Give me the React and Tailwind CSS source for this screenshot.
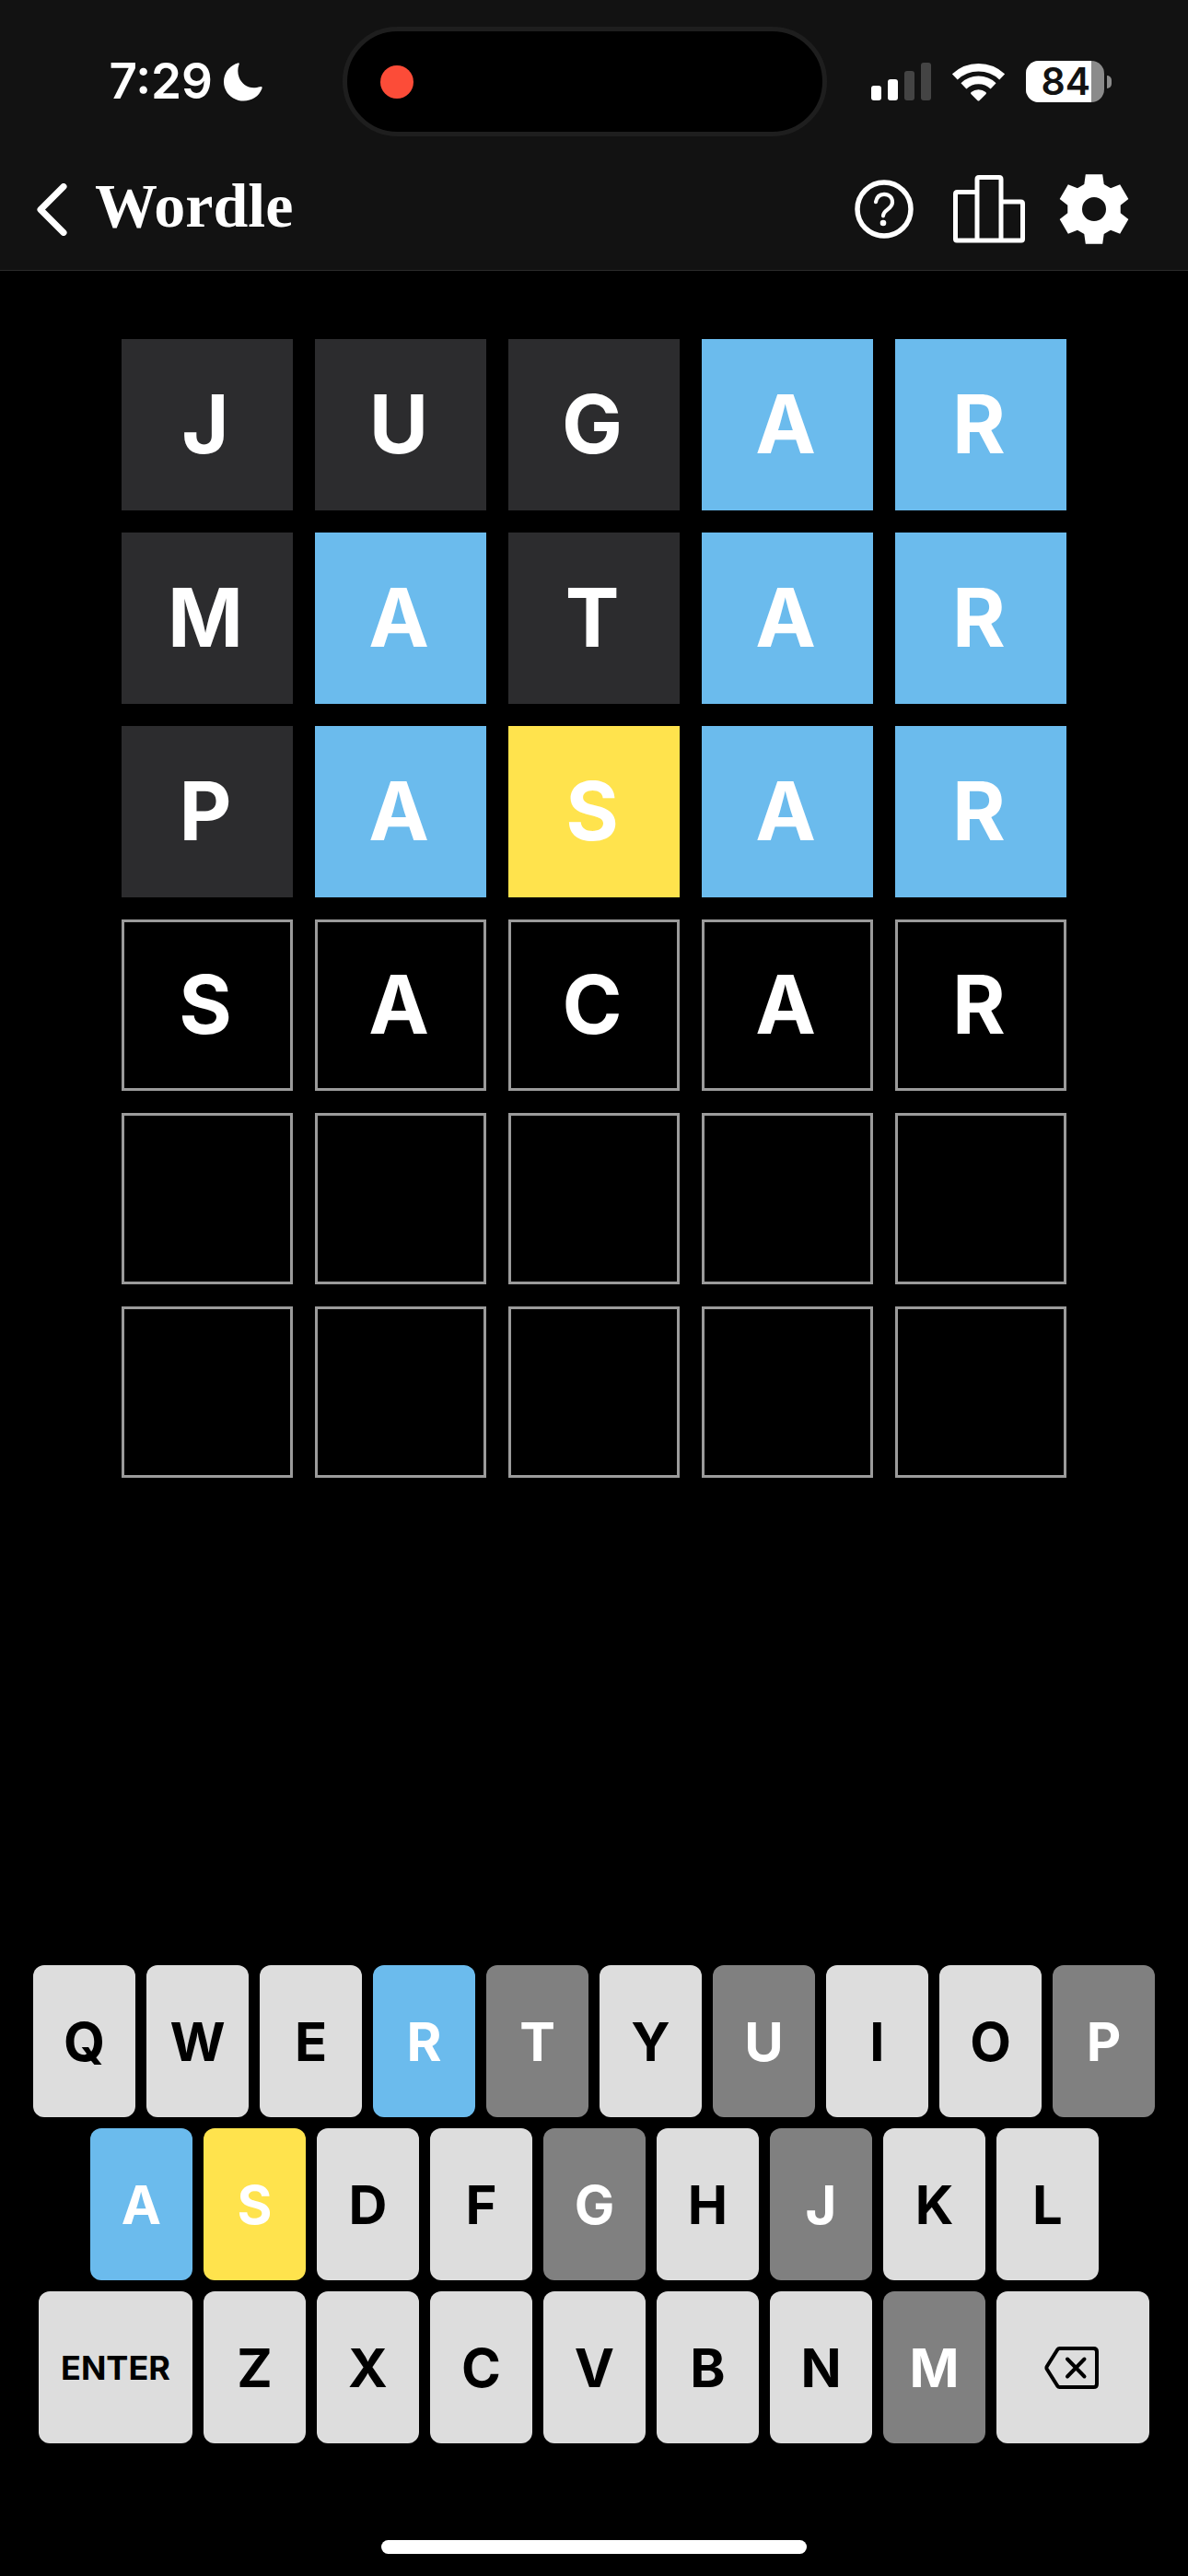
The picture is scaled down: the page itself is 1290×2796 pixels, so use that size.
import React from "react";

const rows = [
  { word: "JUGAR", marks: "xxxcc" },
  { word: "MATAR", marks: "xcxcc" },
  { word: "PASAR", marks: "xcpcc" },
  { word: "SACAR", marks: "     " },
  { word: "     ", marks: "     " },
  { word: "     ", marks: "     " },
];

const tileStyles = {
  x: "bg-[#2c2c2e]",
  c: "bg-[#6bbbed]",
  p: "bg-[#ffe34d]",
  " ": "border-[3px] border-[#9b9b9b]",
};

const keyStyles = {
  x: "bg-[#808080] text-white",
  c: "bg-[#6bbbed] text-white",
  p: "bg-[#ffe34d] text-white",
  default: "bg-[#dddddd] text-black",
};

const keyMarks = { R: "c", A: "c", S: "p", T: "x", U: "x", P: "x", G: "x", J: "x", M: "x" };

function Moon() {
  return (
    <svg width="42" height="42" viewBox="0 0 42 42" fill="#fff" aria-hidden="true">
      <path d="M15.3.4C16.9 0 17 1 16.4 2.6C15 6.5 14.8 11.5 16.6 16C19.4 23.3 26.5 28 34 27.2C37 26.9 38.8 26 40.2 25.9C41.8 25.8 41.8 27 41.3 28.5C38.2 36.5 30.5 41.5 21.5 41.5C9.5 41.5 0 32.3 0 20.7C0 11 6.3 2.9 15.3.4Z" />
    </svg>
  );
}

function Signal() {
  return (
    <svg width="65" height="41" viewBox="0 0 65 41" role="img" aria-label="Signal">
      <rect x="0" y="25" width="11" height="16" rx="3" fill="#fff" />
      <rect x="18" y="18" width="11" height="23" rx="3" fill="#fff" />
      <rect x="36" y="9" width="11" height="32" rx="3" fill="#444" />
      <rect x="54" y="0" width="11" height="41" rx="3" fill="#444" />
    </svg>
  );
}

function Wifi() {
  return (
    <svg width="57" height="42" viewBox="0 0 57 42" role="img" aria-label="Wi-Fi">
      <g fill="none" stroke="#fff" strokeWidth="8.6">
        <path d="M2.8 15.4A37.5 37.5 0 0 1 54.2 15.4" />
        <path d="M12.4 25.3A23.3 23.3 0 0 1 44.6 25.3" />
      </g>
      <path d="M27.6 41.2L20.3 33.9Q19.5 32.8 20.6 31.9A13 13 0 0 1 36.4 31.9Q37.5 32.8 36.7 33.9L29.4 41.2Q28.5 42 27.6 41.2Z" fill="#fff" />
    </svg>
  );
}

function Battery() {
  return (
    <div className="flex items-center gap-[3px]">
      <div className="flex h-[45px] w-[85px] items-center rounded-[14px] bg-[#8b8b8b]">
        <div className="flex h-full w-[71px] items-center justify-end rounded-l-[14px] bg-white pr-px text-[41px] leading-none font-semibold text-[#121212]">
          84
        </div>
      </div>
      <div className="h-[14px] w-[5px] rounded-r-full bg-[#8b8b8b]" />
    </div>
  );
}

function BackIcon() {
  return (
    <svg width="33" height="57" viewBox="0 0 33 57" fill="none" stroke="#fff" strokeWidth="7" strokeLinecap="round" strokeLinejoin="round" aria-hidden="true">
      <path d="M29 3.5L4 28.5L29 53.5" />
    </svg>
  );
}

function HelpIcon() {
  return (
    <svg width="64" height="64" viewBox="0 0 64 64" fill="none" stroke="#fff" aria-hidden="true">
      <circle cx="32" cy="32" r="29" strokeWidth="5.5" />
      <path d="M23 24.2C24 18.6 27.3 15.8 32 15.8C37.4 15.8 41 19.4 41 24.4C41 32 31 32.5 31 39.3" strokeWidth="4.2" strokeLinecap="round" />
      <circle cx="31" cy="47" r="3.3" fill="#fff" stroke="none" />
    </svg>
  );
}

function StatsIcon() {
  return (
    <svg width="78" height="74" viewBox="0 0 78 74" fill="none" stroke="#fff" strokeWidth="5" aria-hidden="true">
      <path d="M26 18.5H4.5Q2.5 18.5 2.5 20.5V69.5Q2.5 71 4 71H74Q75.5 71 75.5 69.5V31Q75.5 29 73.5 29H52" />
      <path d="M26 71V4.5Q26 2.5 28 2.5H50Q52 2.5 52 4.5V71" />
    </svg>
  );
}

const gearPoints = [0, 1, 2, 3, 4, 5]
  .flatMap((tooth) => {
    const angle = (tooth * Math.PI) / 3;
    return [
      [-10.7, -27],
      [-9.2, -37.8],
      [9.2, -37.8],
      [10.7, -27],
    ].map(([x, y]) => [
      38 + x * Math.cos(angle) - y * Math.sin(angle),
      38 + x * Math.sin(angle) + y * Math.cos(angle),
    ]);
  })
  .map(([x, y]) => `${x.toFixed(2)} ${y.toFixed(2)}`)
  .join("L");

function GearIcon() {
  return (
    <svg width="76" height="76" viewBox="0 0 76 76" aria-hidden="true">
      <path
        d={`M${gearPoints}ZM38 25A13 13 0 1 0 38 51A13 13 0 1 0 38 25Z`}
        fill="#fff"
        fillRule="evenodd"
      />
    </svg>
  );
}

function BackspaceIcon() {
  return (
    <svg width="59" height="46" viewBox="0 0 59 46" fill="none" stroke="#000" strokeWidth="4" strokeLinecap="round" strokeLinejoin="round" aria-hidden="true">
      <path d="M16.5 2H53.5Q57 2 57 5.5V40.5Q57 44 53.5 44H16.5Q15.2 44 14.3 42.8L2.8 24.5Q2 23 2.8 21.5L14.3 3.2Q15.2 2 16.5 2Z" />
      <path d="M25 13.5L43.5 32.5M43.5 13.5L25 32.5" />
    </svg>
  );
}

function Key({ letter }) {
  return (
    <button
      type="button"
      className={`flex h-[165px] min-w-0 flex-1 items-center justify-center rounded-xl text-[58px] leading-none font-bold ${keyStyles[keyMarks[letter] || "default"]}`}
    >
      {letter}
    </button>
  );
}

export default function App() {
  return (
    <div className="flex min-h-screen flex-col bg-black font-['Inter','Liberation_Sans',sans-serif] text-white">
      <header className="border-b border-[#2a2a2a] bg-[#121212] pb-4">
        <div className="grid h-[177px] grid-cols-[1fr_526px_1fr] items-center pr-5">
          <div className="flex items-center justify-end gap-3 pr-[87px]">
            <span className="text-[53px] leading-none font-semibold">7:29</span>
            <Moon />
          </div>
          <div className="flex h-[119px] items-center rounded-full border-[5px] border-[#1e1e1e] bg-black pl-9">
            <div className="size-9 rounded-full bg-[#fc4c38]" />
          </div>
          <div className="flex items-center gap-[23px] pl-12">
            <Signal />
            <Wifi />
            <Battery />
          </div>
        </div>
        <nav className="flex h-[100px] items-center pr-16 pl-10">
          <button type="button" aria-label="Back">
            <BackIcon />
          </button>
          <h1 className="flex-1 pb-2 pl-[30px] font-['Liberation_Serif',serif] text-[68px] leading-none font-bold">
            Wordle
          </h1>
          <div className="flex items-center">
            <button type="button" aria-label="Help" className="mr-[43px]">
              <HelpIcon />
            </button>
            <button type="button" aria-label="Statistics" className="mr-[37px]">
              <StatsIcon />
            </button>
            <button type="button" aria-label="Settings">
              <GearIcon />
            </button>
          </div>
        </nav>
      </header>

      <main className="flex flex-1 flex-col justify-between pt-[74px]">
        <div className="grid grid-cols-5 gap-6 px-[132px]">
          {rows.flatMap(({ word, marks }, row) =>
            [...word].map((letter, col) => (
              <div
                key={`${row}-${col}`}
                className={`flex aspect-square items-center justify-center pr-1 pb-0.5 text-[88px] leading-none font-bold ${tileStyles[marks[col]]}`}
              >
                {letter.trim()}
              </div>
            ))
          )}
        </div>

        <div className="flex flex-col gap-3">
          <div className="flex gap-3 px-9">
            {[..."QWERTYUIOP"].map((letter) => (
              <Key key={letter} letter={letter} />
            ))}
          </div>
          <div className="flex gap-3 pr-[97px] pl-[98px]">
            {[..."ASDFGHJKL"].map((letter) => (
              <Key key={letter} letter={letter} />
            ))}
          </div>
          <div className="flex gap-3 px-[42px]">
            <button
              type="button"
              className="flex h-[165px] w-[167px] items-center justify-center rounded-xl bg-[#dddddd] text-[36px] leading-none font-bold text-black"
            >
              ENTER
            </button>
            {[..."ZXCVBNM"].map((letter) => (
              <Key key={letter} letter={letter} />
            ))}
            <button
              type="button"
              aria-label="Backspace"
              className="flex h-[165px] w-[166px] items-center justify-center rounded-xl bg-[#dddddd] pr-1"
            >
              <BackspaceIcon />
            </button>
          </div>
        </div>
      </main>

      <footer className="flex justify-center pt-[105px] pb-6">
        <div className="h-[15px] w-[462px] rounded-full bg-white" />
      </footer>
    </div>
  );
}
